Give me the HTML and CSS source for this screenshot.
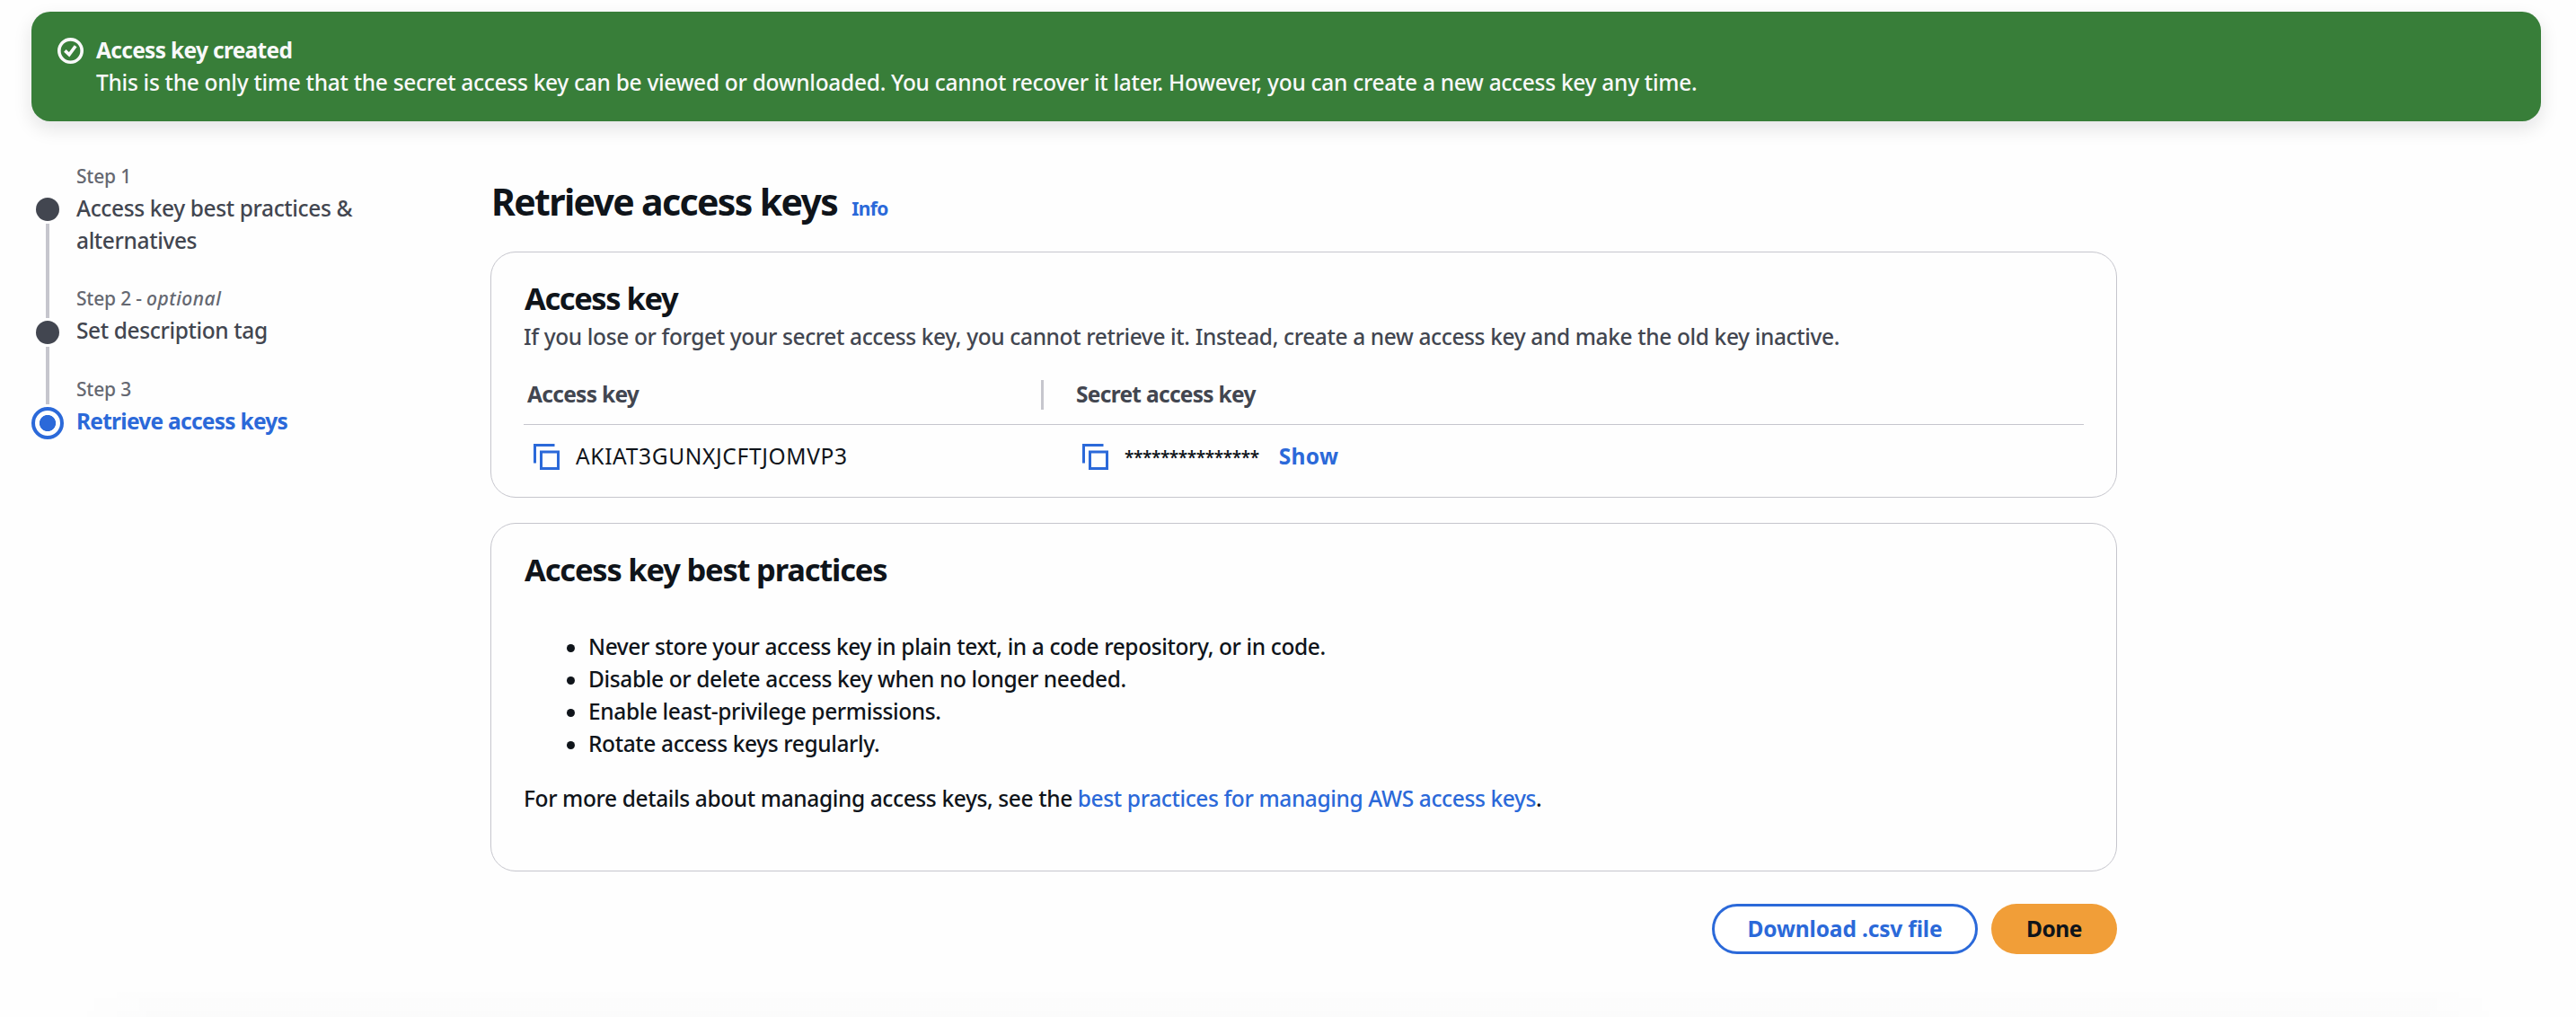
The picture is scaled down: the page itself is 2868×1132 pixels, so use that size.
FILE: index.html
```html
<!DOCTYPE html>
<html lang="en">
<head>
<meta charset="utf-8">
<title>Retrieve access keys</title>
<link rel="stylesheet" href="styles.css">
</head>
<body>
<div class="flash">
  <svg class="flash-icon" viewBox="0 0 16 16" fill="none" stroke="currentColor" stroke-width="2"><circle cx="8" cy="8" r="7"/><path d="M4.6 7.9 7.2 10.4 11.1 5.1"/></svg>
  <div>
    <div class="flash-title">Access key created</div>
    <div class="flash-text">This is the only time that the secret access key can be viewed or downloaded. You cannot recover it later. However, you can create a new access key any time.</div>
  </div>
</div>

<div class="wizard">
  <nav class="steps">
    <div class="step step-1">
      <div class="rail"><span class="dot"></span><span class="line"></span></div>
      <div><div class="step-no">Step 1</div><div class="step-name">Access key best practices &amp; alternatives</div></div>
    </div>
    <div class="step step-2">
      <div class="rail"><span class="dot"></span><span class="line"></span></div>
      <div><div class="step-no">Step 2 - <em>optional</em></div><div class="step-name">Set description tag</div></div>
    </div>
    <div class="step step-3">
      <div class="rail"><span class="ring"></span></div>
      <div><div class="step-no">Step 3</div><div class="step-name active">Retrieve access keys</div></div>
    </div>
  </nav>

  <main class="main">
    <header class="heading"><h1>Retrieve access keys</h1><a class="info">Info</a></header>

    <section class="card card-key">
      <h2>Access key</h2>
      <p class="description">If you lose or forget your secret access key, you cannot retrieve it. Instead, create a new access key and make the old key inactive.</p>
      <div class="row head">
        <div class="cell first">Access key</div>
        <div class="cell">Secret access key</div>
      </div>
      <div class="row values">
        <div class="cell first">
          <svg class="copy" viewBox="0 0 29 29" fill="none" stroke="currentColor" stroke-width="3"><path d="M1.5 21.5v-20h22"/><path d="M8.5 9h19v18.5h-19z"/></svg>
          <span class="key-id">AKIAT3GUNXJCFTJOMVP3</span>
        </div>
        <div class="cell">
          <svg class="copy" viewBox="0 0 29 29" fill="none" stroke="currentColor" stroke-width="3"><path d="M1.5 21.5v-20h22"/><path d="M8.5 9h19v18.5h-19z"/></svg>
          <span class="stars">***************</span>
          <a class="show">Show</a>
        </div>
      </div>
    </section>

    <section class="card card-practices">
      <h2>Access key best practices</h2>
      <ul>
        <li>Never store your access key in plain text, in a code repository, or in code.</li>
        <li>Disable or delete access key when no longer needed.</li>
        <li>Enable least-privilege permissions.</li>
        <li>Rotate access keys regularly.</li>
      </ul>
      <p class="more">For more details about managing access keys, see the <a>best practices for managing AWS access keys</a>.</p>
    </section>

    <div class="actions">
      <button class="btn btn-normal">Download .csv file</button>
      <button class="btn btn-primary">Done</button>
    </div>
  </main>
</div>
<footer class="footer"></footer>
</body>
</html>
```
FILE: styles.css
```css
* { box-sizing: border-box; }
body {
  margin: 0;
  padding-top: 13px;
  height: 1132px;
  background: #fefefe;
  color: #0f141a;
  font: 500 24.5px/36px "Noto Sans", "Open Sans", sans-serif;
  letter-spacing: -0.38px;
}
h1, h2, p, ul { margin: 0; padding: 0; }
a { color: #2b69d9; }

.flash {
  display: flex;
  height: 122px;
  margin: 0 39px 0 35px;
  padding: 25px 29px;
  border-radius: 21px;
  background: #387e39;
  color: #f9f9fa;
  box-shadow: 0 8px 20px 1px rgba(0, 7, 22, 0.1);
}
.flash-icon { width: 29px; height: 29px; margin: 4px 14px 0 0; }
.flash-title { font-weight: 700; letter-spacing: -0.69px; }
.flash-text { letter-spacing: -0.29px; }

.wizard { display: flex; height: 969px; }
.steps { width: 546px; padding: 46px 0 0 35px; flex: none; }
.step { display: flex; gap: 14px; }
.step-1 { height: 136px; }
.step-2 { height: 101px; }
.step-no {
  margin-bottom: 3px;
  color: #656871;
  font-size: 21px;
  line-height: 30px;
  letter-spacing: -0.2px;
}
.step-no em { letter-spacing: 0.5px; }
.step-name { width: 330px; color: #424650; }
.step-name.active { color: #2b69d9; font-weight: 700; letter-spacing: -0.74px; }
.rail {
  display: flex;
  flex-direction: column;
  align-items: center;
  gap: 3px;
  width: 36px;
  margin-bottom: -37px;
  padding-top: 39px;
}
.step-2 .rail { padding-top: 40px; margin-bottom: -32px; }
.step-3 .rail { margin: 0; padding-top: 35px; }
.dot { width: 26px; height: 26px; border-radius: 50%; background: #424650; }
.line { width: 4px; flex: 1; background: #c6c6cd; }
.ring {
  width: 36px;
  height: 36px;
  border: 4px solid #2b69d9;
  border-radius: 50%;
  background: radial-gradient(circle, #2b69d9 8.7px, transparent 9.4px);
}

.main { width: 1811px; padding-top: 62px; }
.heading { display: flex; align-items: baseline; gap: 16px; height: 83px; padding-left: 1px; }
h1 { font-size: 41px; line-height: 54px; letter-spacing: -1.65px; }
.info { font-size: 21px; font-weight: 700; letter-spacing: -0.6px; }

.card {
  padding: 28px 36px 0;
  border: 1px solid #c6c6cd;
  border-radius: 28px;
}
.card-key { height: 274px; }
.card-practices { height: 388px; margin-top: 28px; }
h2 { font-size: 34.5px; line-height: 45px; letter-spacing: -1.2px; padding-left: 1px; }
.card-key h2 { letter-spacing: -1.45px; }
.description { margin-top: 3px; color: #424650; letter-spacing: -0.37px; }

.row { display: flex; align-items: center; }
.cell { display: flex; align-items: center; padding-left: 36px; }
.cell.first { width: 579px; padding-left: 4px; }
.head {
  height: 67px;
  margin-top: 13px;
  border-bottom: 1px solid #c6c6cd;
  color: #424650;
  font-weight: 700;
  letter-spacing: -0.7px;
}
.head .first { height: 33px; border-right: 3px solid #c6c6cd; }
.values { height: 70px; }
.values .cell { padding-left: 43px; }
.values .cell.first { padding-left: 11px; }
.copy { width: 29px; height: 29px; margin: 1px 18px 0 0; color: #2b69d9; }
.key-id { font-weight: 400; letter-spacing: 0.66px; }
.stars { padding-top: 1px; font-size: 19px; font-weight: 600; letter-spacing: -0.4px; }
.show { margin-left: 22px; font-weight: 700; letter-spacing: 0.4px; }

ul { margin-top: 46px; padding-left: 48px; list-style: none; }
li { display: flex; align-items: center; }
li::before {
  content: "";
  width: 9px;
  height: 9px;
  margin: 2px 15px 0 0;
  border-radius: 50%;
  background: #0f141a;
}
.more { margin-top: 25px; }

.actions { display: flex; justify-content: flex-end; gap: 15px; margin-top: 36px; }
.btn {
  height: 56px;
  padding: 0;
  border-radius: 28px;
  font: inherit;
  font-weight: 700;
}
.btn-normal { width: 296px; border: 3px solid #2b69d9; background: #fff; color: #2b69d9; letter-spacing: -0.15px; }
.btn-primary { width: 140px; border: 0; background: #f19e38; color: #0f141a; letter-spacing: -0.5px; }

.footer {
  height: 28px;
  margin: 0 80px;
  background: linear-gradient(to bottom, rgba(0, 7, 22, 0.003), rgba(0, 7, 22, 0.012));
  mask-image: linear-gradient(to right, transparent, #000 100px, #000 calc(100% - 100px), transparent);
}
```
